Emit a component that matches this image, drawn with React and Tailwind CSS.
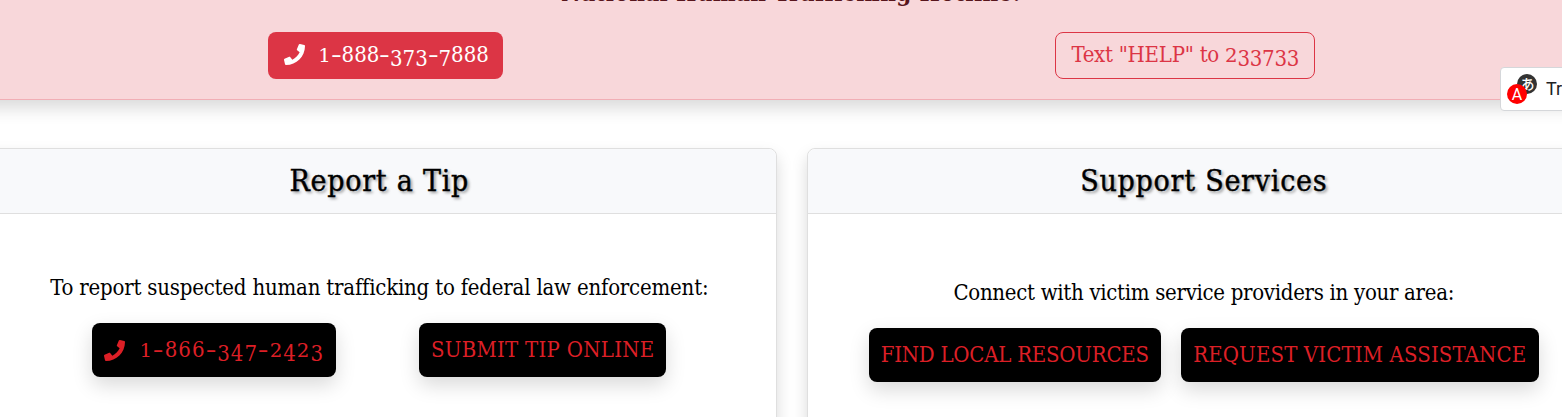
import React from "react";
import { FaPhone } from "react-icons/fa";

const SMALL_DIGITS = "012";
const LOW_DIGITS = "34579";

// Sets digits as old-style figures: 0-2 at x-height, 3/4/5/7/9 descending.
function Figures({ children }) {
  return (
    <span>
      {[...children].map((ch, i) => {
        if (SMALL_DIGITS.includes(ch)) {
          return (
            <span key={i} className="inline-block origin-[50%_83%] scale-y-[0.8]">
              {ch}
            </span>
          );
        }
        if (LOW_DIGITS.includes(ch)) {
          return (
            <span key={i} className="inline-block translate-y-[3.5px]">
              {ch}
            </span>
          );
        }
        if (ch === "-") {
          return (
            <span key={i} className="mx-[2px] inline-block scale-x-[1.6]">
              {ch}
            </span>
          );
        }
        return ch;
      })}
    </span>
  );
}

function DarkButton({ className, children }) {
  return (
    <a
      className={`flex h-[54px] items-center justify-center whitespace-nowrap rounded-lg bg-black text-[22px] leading-none text-[#dc1f26] shadow-[0_8px_20px_rgba(0,0,0,0.15)] ${className}`}
    >
      {children}
    </a>
  );
}

function Card({ title, bodyClass, children }) {
  return (
    <section className="h-[400px] rounded-lg border border-[#dfdfdf] bg-white shadow-[0_8px_16px_rgba(0,0,0,0.15)]">
      <h2 className="flex h-[65px] items-center justify-center rounded-t-lg border-b border-[#dfdfdf] bg-[#f8f9fb] text-[30px] leading-none tracking-[0.75px] [text-shadow:2px_2px_3px_rgba(0,0,0,0.4)] [-webkit-text-stroke:0.4px_currentColor]">
        {title}
      </h2>
      <div className={`flex flex-col items-center ${bodyClass}`}>{children}</div>
    </section>
  );
}

function TranslateWidget() {
  return (
    <div className="absolute left-[1500px] top-[67px] flex h-11 w-[140px] items-center rounded-[4px] border border-[#d5d7da] bg-white pl-[5px] font-['Roboto',sans-serif] text-[18px] leading-none text-[#202124]">
      <svg width="32" height="32" viewBox="0 0 32 32" className="mr-[8px] shrink-0">
        <circle cx="21" cy="11" r="10" fill="#333" />
        <text x="21.5" y="16" textAnchor="middle" fontSize="14" fill="#fff" fontFamily="Noto Sans CJK JP, sans-serif" fontWeight="500">あ</text>
        <circle cx="11" cy="21" r="10" fill="#f00" />
        <text x="11" y="26.5" textAnchor="middle" fontSize="16" fill="#fff" fontFamily="Roboto, sans-serif">A</text>
      </svg>
      <span>Translate</span>
    </div>
  );
}

export default function App() {
  return (
    <div className="relative h-[417px] w-full overflow-hidden bg-white font-['DejaVu_Serif_Condensed','DejaVu_Serif',serif] text-black">
      <div className="-mx-8 flow-root h-[100px] border-b border-[#f1aeb5] bg-[#f8d7da] px-8 shadow-[0_8px_16px_rgba(0,0,0,0.15)]">
        <h3 className="-mt-[20px] h-[52px] pl-[20px] text-center text-[24px] font-bold leading-[26px] tracking-[0.35px] text-[#58151c]">
          National Human Trafficking Hotline:
        </h3>
        <div className="-ml-[14px] grid w-[1599px] grid-cols-2 justify-items-center text-[22px] leading-none">
          <a className="flex h-[47px] w-[235px] items-center whitespace-nowrap rounded-lg bg-[#dc3545] pb-[2px] pl-4 text-white">
            <FaPhone className="mr-[13px] size-[21px] shrink-0" />
            <Figures>1-888-373-7888</Figures>
          </a>
          <a className="flex h-[47px] w-[260px] items-center justify-center whitespace-nowrap rounded-lg border border-[#dc3545] pb-[2px] tracking-[-0.25px] text-[#dc3545]">
            <span>Text "HELP" to <Figures>233733</Figures></span>
          </a>
        </div>
      </div>

      <main className="-ml-[18px] grid w-[1619px] grid-cols-2 gap-[30px] pt-12">
        <Card title="Report a Tip" bodyClass="pt-[60px]">
          <p className="h-[49px] whitespace-nowrap text-[22px] leading-[28px] tracking-[-0.2px]">
            To report suspected human trafficking to federal law enforcement:
          </p>
          <div className="flex gap-[83px]">
            <DarkButton className="w-[244px] tracking-[1px]">
              <FaPhone className="mr-[14px] size-[21px] shrink-0" />
              <Figures>1-866-347-2423</Figures>
            </DarkButton>
            <DarkButton className="w-[247px] tracking-[0.25px]">SUBMIT TIP ONLINE</DarkButton>
          </div>
        </Card>
        <Card title="Support Services" bodyClass="pt-[65px]">
          <p className="h-[49px] whitespace-nowrap text-[22px] leading-[28px] tracking-[-0.3px]">
            Connect with victim service providers in your area:
          </p>
          <div className="flex gap-5">
            <DarkButton className="w-[292px] tracking-[-0.25px]">FIND LOCAL RESOURCES</DarkButton>
            <DarkButton className="w-[358px] tracking-[0.12px]">REQUEST VICTIM ASSISTANCE</DarkButton>
          </div>
        </Card>
      </main>
      <TranslateWidget />
    </div>
  );
}
